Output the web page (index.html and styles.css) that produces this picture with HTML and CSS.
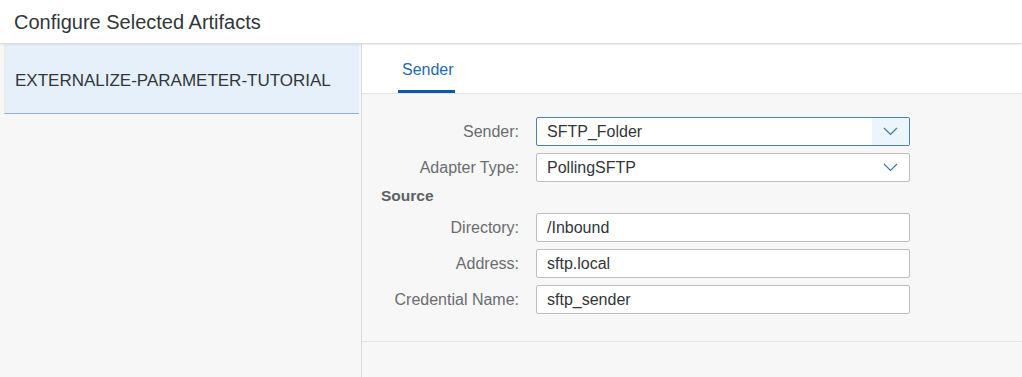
FILE: index.html
```html
<!DOCTYPE html>
<html lang="en">
<head>
    <meta charset="UTF-8">
    <meta name="viewport" content="width=device-width, initial-scale=1.0">
    <title>Configure Selected Artifacts</title>
    <link rel="stylesheet" href="styles.css">
</head>
<body>
    <div class="header">
        <h1>Configure Selected Artifacts</h1>
    </div>

    <div class="main">
        <div class="side">
            <div class="side-item selected">EXTERNALIZE-PARAMETER-TUTORIAL</div>
        </div>

        <div class="content">
            <div class="tabs">
                <div class="tab active">Sender</div>
            </div>

            <div class="form">
                <label>Sender:</label>
                <div class="select focused">
                    <span>SFTP_Folder</span>
                    <span class="arrow">
                        <svg width="15" height="9" viewBox="0 0 15 9"><path d="M1 1 L7.5 7.5 L14 1" fill="none" stroke="#3a76b8" stroke-width="1.2"/></svg>
                    </span>
                </div>

                <label>Adapter Type:</label>
                <div class="select">
                    <span>PollingSFTP</span>
                    <span class="arrow">
                        <svg width="15" height="9" viewBox="0 0 15 9"><path d="M1 1 L7.5 7.5 L14 1" fill="none" stroke="#3a76b8" stroke-width="1.2"/></svg>
                    </span>
                </div>

                <h4>Source</h4>

                <label>Directory:</label>
                <div class="input">/Inbound</div>

                <label>Address:</label>
                <div class="input">sftp.local</div>

                <label>Credential Name:</label>
                <div class="input">sftp_sender</div>
            </div>

            <div class="footer"></div>
        </div>
    </div>
</body>
</html>
```

FILE: styles.css
```css
body { font-family: "Liberation Sans", Arial, sans-serif; margin: 0; background: #f7f7f7; color: #32363a; height: 377px; overflow: hidden; }
.header { background: white; height: 44px; border-bottom: 1px solid #dcdcdc; box-shadow: 0 1px 2px rgba(0,0,0,0.08); display: flex; align-items: center; position: relative; z-index: 1; box-sizing: border-box; padding-top: 1px; }
.header h1 { margin: 0 0 0 14px; font-size: 20px; font-weight: normal; color: #32363a; }
.main { display: flex; height: 333px; }
.side { border-right: 1px solid #d9d9d9; box-sizing: border-box; width: 362px; padding-left: 4px; }
.side-item { height: 70px; display: flex; align-items: center; padding: 5px 0 0 10px; font-size: 17px; box-sizing: border-box; }
.side-item.selected { background: #e5f0fa; border-bottom: 1px solid #8cb1dc; border-left: 1px solid #f0e9dc; margin-right: 2px; }
.content { flex: 1; display: flex; flex-direction: column; }
.tabs { background: white; height: 50px; border-bottom: 1px solid #e3e3e3; box-sizing: border-box; padding-left: 36px; display: flex; }
.tab { font-size: 16px; color: #2a68ad; padding: 5px 1px 0 4px; display: flex; align-items: center; border-bottom: 3px solid transparent; }
.tab.active { border-bottom-color: #0b5aa8; }
.form { display: grid; grid-template-columns: 157px 374px; column-gap: 17px; row-gap: 7px; padding: 23px 0 27px 0; border-bottom: 1px solid #e5e5e5; }
.form label { font-size: 16px; color: #6a6d70; text-align: right; align-self: center; }
.form h4 { grid-column: 1 / 3; margin: 0; padding-left: 19px; font-size: 15.5px; font-weight: bold; color: #5e6164; height: 17px; line-height: 13px; }
.input, .select { height: 29px; box-sizing: border-box; background: white; border: 1px solid #bfbfbf; border-radius: 2px; font-size: 16px; color: #32363a; display: flex; align-items: center; padding-left: 10px; }
.select { justify-content: space-between; padding-right: 0; }
.select .arrow { width: 37px; height: 100%; display: flex; align-items: center; justify-content: center; }
.select.focused { border-color: #4a7fbf; }
.select.focused .arrow { background: #ebf5fe; }
.footer { flex: 1; }
```
